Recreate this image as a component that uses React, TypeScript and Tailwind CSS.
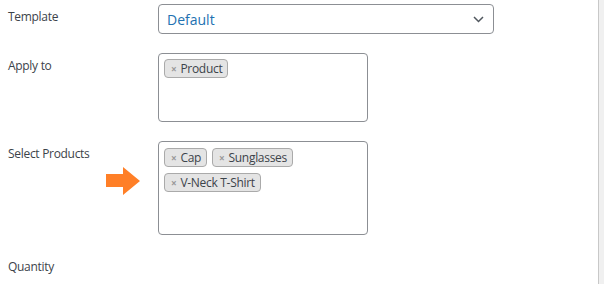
const font = { fontFamily: '"Open Sans", "Noto Sans", sans-serif' };

function Tag({ label }: { label: string }) {
  return (
    <span className="flex items-center h-[19px] pl-[6px] pr-[5px] rounded-[4px] border border-[#aaaaaa] bg-[#e4e4e4] text-[12px] tracking-[-0.3px] leading-none text-[#3c434a]">
      <span className="text-[#999999] text-[10px] font-bold mr-[4px]">×</span>
      {label}
    </span>
  );
}

function Arrow() {
  return (
    <svg width="36" height="29" viewBox="0 0 36 29" className="ml-[98px] mt-[4px]">
      <path d="M0 7 H17 V0 L34 14 L17 28 V20 H0 Z" fill="#ff7f27" />
    </svg>
  );
}

const labelCls = 'pt-[4px] leading-[18px] text-[12px] tracking-[-0.3px] text-[#3c434a]';

export default function App() {
  return (
    <div className="flex h-[284px] w-[604px] overflow-hidden bg-white" style={font}>
      <div className="flex-1 pt-[4px] pl-[8px] space-y-[19px]">
        <div className="flex">
          <label className={`w-[150px] ${labelCls}`}>Template</label>
          <div className="w-[336px] h-[30px] flex items-center justify-between pl-[8px] pr-[9px] rounded-[4px] border border-[#8c8f94]">
            <span className="text-[14px] text-[#2271b1]">Default</span>
            <svg width="11" height="7" viewBox="0 0 11 7">
              <path d="M1 1 L5.5 5.5 L10 1" fill="none" stroke="#50575e" strokeWidth="1.5" />
            </svg>
          </div>
        </div>

        <div className="flex">
          <label className={`w-[150px] ${labelCls}`}>Apply to</label>
          <div className="w-[210px] h-[69px] rounded-[4px] border border-[#8c8f94] pt-[5px] pl-[5px] flex items-start">
            <Tag label="Product" />
          </div>
        </div>

        <div className="flex">
          <div className="w-[150px] flex flex-col">
            <label className={labelCls}>Select Products</label>
            <Arrow />
          </div>
          <div className="w-[210px] h-[94px] rounded-[4px] border border-[#8c8f94] pt-[6px] pl-[5px] flex flex-wrap content-start gap-x-[5px] gap-y-[6px]">
            <Tag label="Cap" />
            <Tag label="Sunglasses" />
            <Tag label="V-Neck T-Shirt" />
          </div>
        </div>

        <div className="flex">
          <label className={`w-[150px] ${labelCls}`}>Quantity</label>
        </div>
      </div>
      <div className="w-[6px] h-full border-l border-[#c8c8c8] bg-[#f0f0f0]" />
    </div>
  );
}
